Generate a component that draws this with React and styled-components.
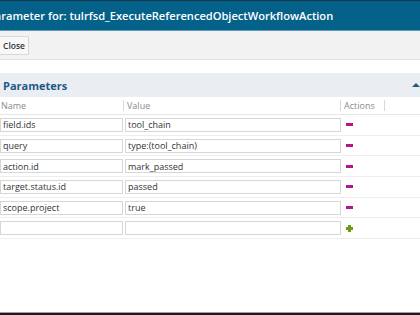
import React from "react";
import styled, { createGlobalStyle } from "styled-components";

const GlobalStyle = createGlobalStyle`
	html, body {
		margin: 0;
		padding: 0;
		background: #ffffff;
	}
	body {
		font-family: "Open Sans", "Liberation Sans", sans-serif;
		color: #333;
		overflow: hidden;
	}
`;

const params = [
	{ name: "field.ids", value: "tool_chain" },
	{ name: "query", value: "type:(tool_chain)" },
	{ name: "action.id", value: "mark_passed" },
	{ name: "target.status.id", value: "passed" },
	{ name: "scope.project", value: "true" },
];

const App = () => {
	return (
		<Page>
			<GlobalStyle />
			<TitleBar>
				<Title>Parameter for: tulrfsd_ExecuteReferencedObjectWorkflowAction</Title>
			</TitleBar>
			<Toolbar>
				<Button>Close</Button>
			</Toolbar>
			<Section>
				<SectionHeader>
					<span>Parameters</span>
					<Caret />
				</SectionHeader>
				<Table>
					<HeadRow>
						<HeadCell>Name</HeadCell>
						<HeadCell $sep>Value</HeadCell>
						<HeadCell $sep $last>
							Actions
						</HeadCell>
					</HeadRow>
					{params.map((p) => (
						<Row key={p.name}>
							<Input defaultValue={p.name} />
							<Input defaultValue={p.value} />
							<Action>
								<Minus />
							</Action>
						</Row>
					))}
					<Row>
						<Input defaultValue="" />
						<Input defaultValue="" />
						<Action>
							<Plus />
						</Action>
					</Row>
				</Table>
			</Section>
			<Footer />
		</Page>
	);
};

const Page = styled.div`
	width: 420px;
	height: 315px;
	display: flex;
	flex-direction: column;
	overflow: hidden;
	position: relative;
`;

const TitleBar = styled.div`
	height: 29px;
	background: #04628a;
	border-top: 1px solid #17394b;
	border-bottom: 1px solid #5a9bb8;
	display: flex;
	align-items: center;
	overflow: hidden;
	white-space: nowrap;
`;

const Title = styled.h1`
	margin: 0 0 0 -12px;
	font-size: 11.1px;
	font-weight: 600;
	color: #ffffff;
`;

const Toolbar = styled.div`
	height: 28px;
	background: #f2f2f2;
	border-bottom: 1px solid #e0e0e0;
	display: flex;
	align-items: center;
`;

const Button = styled.button`
	margin-left: -10px;
	height: 19px;
	padding: 0 3px 0 12px;
	font-family: "Open Sans", "Liberation Sans", sans-serif;
	font-size: 8.5px;
	font-weight: 600;
	color: #333;
	background: #f8f8f8;
	border: 1px solid #d8d8d8;
	border-radius: 1px;
`;

const Section = styled.div`
	margin-top: 13px;
`;

const SectionHeader = styled.div`
	height: 24px;
	background: #eaeef2;
	display: flex;
	align-items: center;
	justify-content: space-between;
	padding: 0 3px 0 3px;
	font-size: 11px;
	font-weight: 700;
	color: #1d5a86;
`;

const Caret = styled.span`
	width: 0;
	height: 0;
	border-left: 4px solid transparent;
	border-right: 4px solid transparent;
	border-bottom: 4px solid #1d5a86;
	margin-right: -3px;
`;

const Table = styled.div`
	display: flex;
	flex-direction: column;
`;

const HeadRow = styled.div`
	display: grid;
	grid-template-columns: 123px 217px 45px 1fr;
	height: 17px;
	align-items: center;
	border-bottom: 1px solid #e6e6e6;
`;

const HeadCell = styled.div`
	font-size: 9px;
	color: #8a8a8a;
	padding-left: ${(p) => (p.$sep ? "3px" : "1px")};
	border-left: ${(p) => (p.$sep ? "1px solid #d8d8d8" : "none")};
	border-right: ${(p) => (p.$last ? "1px solid #d8d8d8" : "none")};
	line-height: 11px;
`;

const Row = styled.div`
	display: grid;
	grid-template-columns: 123px 216px 1fr;
	column-gap: 2px;
	align-items: center;
	height: 19.7px;
	border-bottom: 1px solid #eeeeee;
`;

const Input = styled.input`
	box-sizing: border-box;
	width: 100%;
	height: 14px;
	margin: 0;
	padding: 0 2px;
	font-family: "Open Sans", "Liberation Sans", sans-serif;
	font-size: 9px;
	color: #333;
	border: 1px solid #d6d6d6;
	border-radius: 0;
	background: #fff;
	outline: none;
`;

const Action = styled.div`
	display: flex;
	align-items: center;
	padding-left: 3px;
	height: 100%;
`;

const Minus = styled.span`
	display: block;
	width: 7px;
	height: 3px;
	background: #b5158f;
`;

const Plus = styled.span`
	position: relative;
	display: block;
	width: 7px;
	height: 7px;
	&::before,
	&::after {
		content: "";
		position: absolute;
		background: #6a9e12;
	}
	&::before {
		left: 0;
		top: 2px;
		width: 7px;
		height: 3px;
	}
	&::after {
		left: 2px;
		top: 0;
		width: 3px;
		height: 7px;
	}
`;

const Footer = styled.div`
	margin-top: auto;
	height: 2px;
	background: #1a1a1a;
	border-top: 1px solid #a0a0a0;
`;

export default App;
